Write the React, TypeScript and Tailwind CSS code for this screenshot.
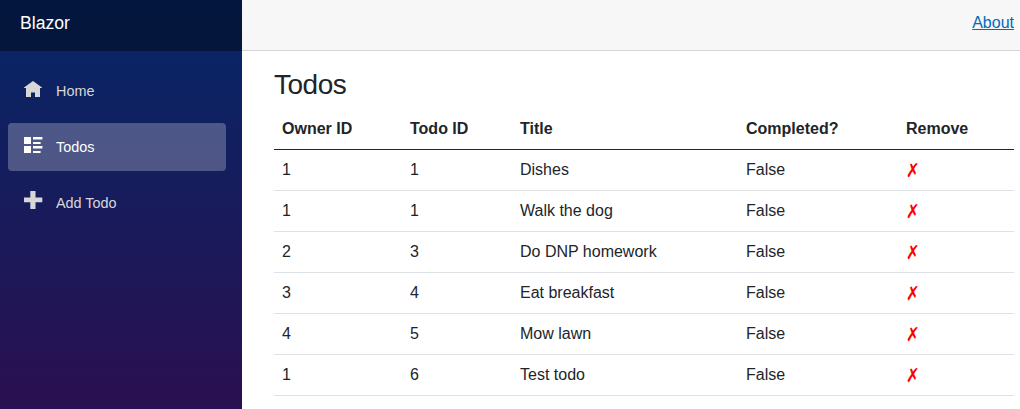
const navItems = [
  {
    label: 'Home',
    path: 'M9 0L0 6.5V7H2V16H7V11.5H11V16H16V7H18V6.5Z',
    iconClass: 'mr-3.5 mb-0.5 h-[18px] w-[18px] fill-current',
    active: false,
  },
  {
    label: 'Todos',
    path: 'M0 0h7v7H0zM9 0h9.4v2.5H9zM9 5h7.6v2H9zM0 9h7v7H0zM9 9h9.4v2.5H9zM9 14h7.6v2H9z',
    iconClass: 'mr-3.5 mb-0.5 h-[18px] w-[18px] overflow-visible fill-current',
    active: true,
  },
  {
    label: 'Add Todo',
    path: 'M6.3 0H11.5V6.6H18.3V11.3H11.5V18H6.3V11.3H0V6.6H6.3Z',
    iconClass: 'mr-3.5 mb-1.5 h-[18px] w-[18px] overflow-visible fill-current',
    active: false,
  },
];

const todos = [
  { owner: 1, id: 1, title: 'Dishes' },
  { owner: 1, id: 1, title: 'Walk the dog' },
  { owner: 2, id: 3, title: 'Do DNP homework' },
  { owner: 3, id: 4, title: 'Eat breakfast' },
  { owner: 4, id: 5, title: 'Mow lawn' },
  { owner: 1, id: 6, title: 'Test todo' },
];

function Sidebar() {
  return (
    <aside className="w-[242px] shrink-0 bg-[linear-gradient(180deg,#052767_0px,#3a0647_580px)]">
      <div className="flex h-[51px] items-center bg-black/40 pb-[5px] pl-5 text-[17.6px] text-white">
        Blazor
      </div>
      <nav className="flex flex-col gap-2 pt-4 pr-4 pl-2">
        {navItems.map((item) => (
          <a
            key={item.label}
            href="#"
            className={
              item.active
                ? 'flex h-12 items-center rounded bg-white/25 pl-4 text-[14.4px] text-white'
                : 'flex h-12 items-center rounded pl-4 text-[14.4px] text-[#d7d7d7]'
            }
          >
            <svg viewBox="0 0 18 18" className={item.iconClass}>
              <path d={item.path} />
            </svg>
            <span className="pt-0.5">{item.label}</span>
          </a>
        ))}
      </nav>
    </aside>
  );
}

function TodoTable() {
  return (
    <table className="w-[740px] table-fixed border-collapse text-left text-base text-[#212529]">
      <colgroup>
        <col className="w-[128px]" />
        <col className="w-[110px]" />
        <col className="w-[226px]" />
        <col className="w-[160px]" />
        <col className="w-[116px]" />
      </colgroup>
      <thead>
        <tr className="h-[41px] border-b border-[#212529]">
          <th className="px-2 pt-px font-bold">Owner ID</th>
          <th className="px-2 pt-px font-bold">Todo ID</th>
          <th className="px-2 pt-px font-bold">Title</th>
          <th className="px-2 pt-px font-bold">Completed?</th>
          <th className="px-2 pt-px font-bold">Remove</th>
        </tr>
      </thead>
      <tbody>
        {todos.map((todo) => (
          <tr key={todo.title} className="h-[41px] border-b border-[#dee2e6]">
            <td className="px-2">{todo.owner}</td>
            <td className="px-2">{todo.id}</td>
            <td className="px-2">{todo.title}</td>
            <td className="px-2">False</td>
            <td className="px-2 pt-0.5 font-['DejaVu_Sans',sans-serif] leading-6 text-[#ff0000]">
              <span className="block w-[13px] origin-center scale-x-105 scale-y-120">✗</span>
            </td>
          </tr>
        ))}
      </tbody>
    </table>
  );
}

export default function App() {
  return (
    <div className="flex h-[409px] overflow-hidden bg-white font-['Liberation_Sans',Arial,sans-serif]">
      <Sidebar />
      <main className="min-w-0 flex-1">
        <header className="flex h-[51px] items-center justify-end border-b border-[#d6d5d5] bg-[#f7f7f7] pr-1.5 pb-[5px]">
          <a href="#" className="text-base text-[#006bb7] underline">
            About
          </a>
        </header>
        <section className="pt-[17px] pl-8">
          <h1 className="h-10 text-[28px] leading-[34px] tracking-[-0.5px] text-[#212529]">Todos</h1>
          <TodoTable />
        </section>
      </main>
    </div>
  );
}
